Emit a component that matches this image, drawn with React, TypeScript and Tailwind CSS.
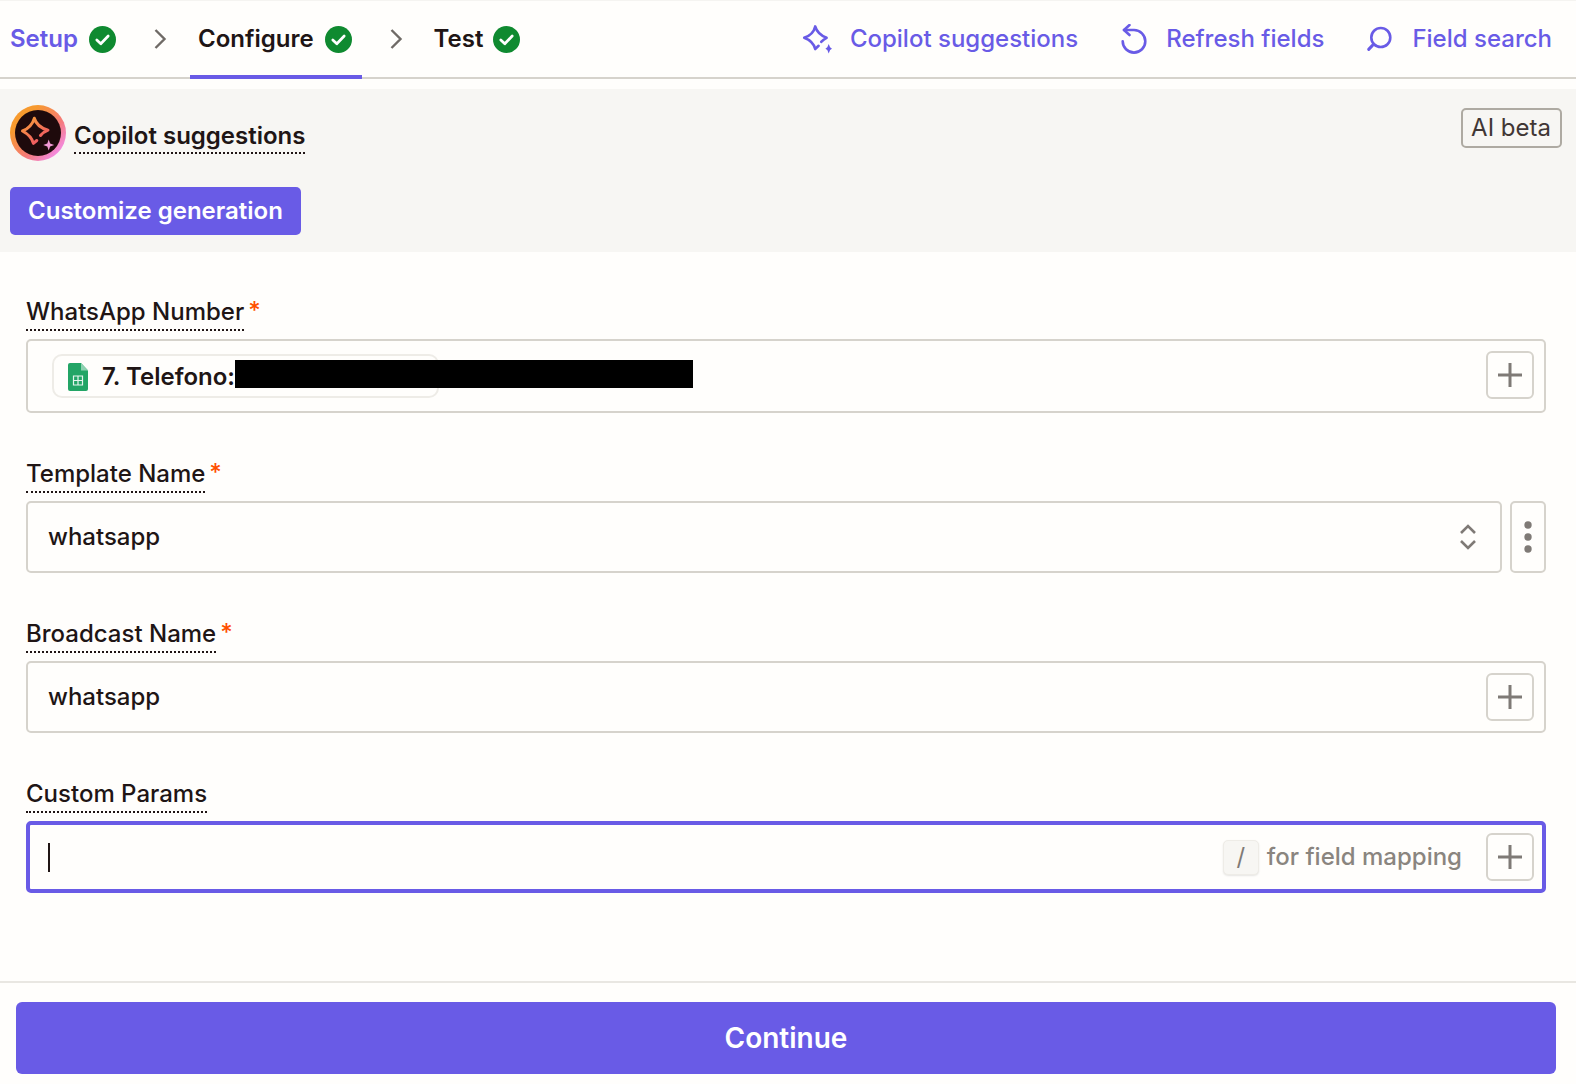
import type { ReactNode } from "react";

const CheckBadge = () => (
  <svg width="27" height="27" viewBox="0 0 27 27" className="shrink-0">
    <circle cx="13.5" cy="13.5" r="13.5" fill="#0f8a30" />
    <path d="M7.8 14l4 3.8 7.4-7.8" fill="none" stroke="#fff" strokeWidth="2.7" strokeLinecap="round" strokeLinejoin="round" />
  </svg>
);

const Chevron = () => (
  <svg width="14" height="22" viewBox="0 0 14 22" className="shrink-0">
    <path d="M2.5 2l9 9-9 9" fill="none" stroke="#6f6a66" strokeWidth="2.4" />
  </svg>
);

const Spark = () => (
  <svg width="30" height="30" viewBox="0 0 30 30" className="shrink-0" fill="none">
    <path
      d="M16.6 21.800L13.200 25C12 20 8.500 16.200 2.200 13.800 8.500 11.500 12 8 13.200 2.400 14.800 8 18.500 11.500 24.600 13.800 22.500 14.800 20.800 16 19.200 17.800"
      stroke="#695be6"
      strokeWidth="2.600"
      strokeLinejoin="round"
      strokeLinecap="round"
    />
    <path d="M26.700 20l1.400 3.300 1.900 1.400-1.900 1.400-1.400 3.300-1.400-3.300-1.900-1.400 1.900-1.400z" fill="#695be6" />
  </svg>
);

const Refresh = () => (
  <svg width="28" height="30" viewBox="0 0 28 30" className="shrink-0" fill="none" stroke="#695be6" strokeWidth="2.600" strokeLinecap="round" strokeLinejoin="round">
    <path d="M4 6h10a11.300 11.300 0 1 1-11.300 11.300" />
    <path d="M9.500 1L4 6l5.500 5" />
  </svg>
);

const SearchIcon = () => (
  <svg width="28" height="28" viewBox="0 0 28 28" className="shrink-0" fill="none" stroke="#695be6" strokeWidth="2.600">
    <circle cx="14.800" cy="12.500" r="9.500" />
    <path d="M6.500 20.400l-3.800 4" strokeWidth="3" strokeLinecap="round" />
  </svg>
);

const Plus = () => (
  <svg width="26" height="26" viewBox="0 0 26 26">
    <path d="M1 13h24M13 1v24" stroke="#7f7a76" strokeWidth="3" />
  </svg>
);

const PlusButton = () => (
  <button className="flex h-12 w-12 shrink-0 items-center justify-center rounded-md border-2 border-[#d6d3cc] bg-[#fffefc]">
    <Plus />
  </button>
);

const Logo = () => (
  <div className="flex h-14 w-14 shrink-0 items-center justify-center rounded-full bg-[linear-gradient(135deg,#f79a2e_25%,#f57a78_60%,#f38ade_85%)]">
    <div className="flex h-[46px] w-[46px] items-center justify-center rounded-full bg-[#1e0a0c]">
      <svg width="46" height="46" viewBox="0 0 46 46" fill="none">
        <defs>
          <linearGradient id="star" x1="10" y1="8" x2="28" y2="34" gradientUnits="userSpaceOnUse">
            <stop stopColor="#f7a038" />
            <stop offset="1" stopColor="#f0506a" />
          </linearGradient>
        </defs>
        <path
          d="M21.800 30.500L18.400 33.300C17 28 13.500 24.200 7.500 21 13.500 18.500 17.500 14.500 19.300 8.300 21 14 25 18 33 20.200 30.500 21.200 27.500 23 25.500 25.500"
          stroke="url(#star)"
          strokeWidth="3"
          strokeLinejoin="round"
          strokeLinecap="round"
        />
        <path d="M33.700 29.500l1.400 4 4.100 1.500-4.100 1.500-1.400 4-1.400-4-4.100-1.500 4.100-1.500z" fill="#f29ad6" />
      </svg>
    </div>
  </div>
);

const SheetsIcon = () => (
  <svg width="20" height="28" viewBox="0 0 20 28" className="shrink-0">
    <path d="M2 0h11l7 7.500V26a2 2 0 0 1-2 2H2a2 2 0 0 1-2-2V2a2 2 0 0 1 2-2z" fill="#23a566" />
    <path d="M13 0l7 7.500h-7z" fill="#8ed1b1" />
    <path d="M5.500 13h9v9h-9z M5.500 17.500h9 M10 13v9" fill="none" stroke="#e6f5ee" strokeWidth="1.200" />
  </svg>
);

function Label({ text, required }: { text: string; required?: boolean }) {
  return (
    <div className="mb-2 flex h-[30px] items-start">
      <span className="h-[30px] border-b-2 border-dotted border-[#201515] text-[24px] leading-[22px] font-medium text-[#201515]">
        {text}
      </span>
      {required && <span className="ml-1 text-[24px] leading-[20px] font-medium text-[#ff4f00]">*</span>}
    </div>
  );
}

function Field({ children, className }: { children: ReactNode; className: string }) {
  return <div className={`flex items-center rounded-[5px] ${className}`}>{children}</div>;
}

function TopAction({ icon, text }: { icon: ReactNode; text: string }) {
  return (
    <a className="flex items-center gap-[18px] text-[24px] font-medium text-[#695be6]">
      {icon}
      {text}
    </a>
  );
}

export default function App() {
  return (
    <div className="min-h-[1084px] bg-[#fffefc] [font-family:Inter,sans-serif]">
      <header className="flex h-[79px] items-stretch justify-between border-t border-b-2 border-t-[#f5f4f1] border-b-[#d6d3cc] pr-[24px] pl-[10px]">
        <nav className="flex items-center text-[24px] font-semibold text-[#201515]">
          <div className="flex items-center gap-[11px] text-[#695be6]">
            Setup
            <CheckBadge />
          </div>
          <div className="mr-[23px] ml-[37px]">
            <Chevron />
          </div>
          <div className="-mb-0.5 flex h-[78px] items-center gap-[11px] border-b-4 border-[#695be6] pt-0.5 pr-[10px] pl-2">
            Configure
            <CheckBadge />
          </div>
          <div className="mr-[31px] ml-[27px]">
            <Chevron />
          </div>
          <div className="flex items-center gap-[10px]">
            Test
            <CheckBadge />
          </div>
        </nav>
        <div className="flex items-center gap-[42px]">
          <TopAction icon={<Spark />} text="Copilot suggestions" />
          <TopAction icon={<Refresh />} text="Refresh fields" />
          <TopAction icon={<SearchIcon />} text="Field search" />
        </div>
      </header>

      <section className="mt-[10px] flex h-[163px] items-start justify-between bg-[#f7f6f3] pt-4 pr-[14px] pl-[10px]">
        <div>
          <div className="flex items-center gap-2">
            <Logo />
            <span className="mt-[7px] border-b-2 border-dotted border-[#201515] text-[24px] leading-[33px] font-semibold text-[#201515]">
              Copilot suggestions
            </span>
          </div>
          <button className="mt-[26px] h-12 rounded-[5px] bg-[#695be6] px-[18px] text-[24px] font-semibold text-white">
            Customize generation
          </button>
        </div>
        <div className="mt-[3px] flex h-10 items-center rounded-[5px] border-2 border-[#aeaaa2] pr-[9px] pl-2 text-[24px] text-[#413735]">
          AI beta
        </div>
      </section>

      <main className="pt-[49px] pr-[30px] pl-[26px]">
        <Label text="WhatsApp Number" required />
        <Field className="relative h-[74px] justify-between border-2 border-[#d6d3cc] pr-[10px] pl-6">
          <div className="flex h-11 w-[387px] items-center gap-[14px] rounded-[10px] border-2 border-[#eeece7] pt-px pl-[14px] text-[24px] font-semibold text-[#201515]">
            <SheetsIcon />
            7. Telefono:
          </div>
          <div className="absolute top-[19px] left-[207px] h-[28px] w-[458px] bg-black" />
          <div className="mb-[2px]">
            <PlusButton />
          </div>
        </Field>

        <div className="mt-[50px]">
          <Label text="Template Name" required />
          <div className="flex gap-2">
            <Field className="h-[72px] flex-1 justify-between border-2 border-[#d6d3cc] pr-[23px] pl-5 text-[24px] font-medium text-[#201515]">
              whatsapp
              <svg width="18" height="26" viewBox="0 0 18 26" fill="none" stroke="#7f7a76" strokeWidth="2.600">
                <path d="M2 9l7-7 7 7M2 17l7 7 7-7" />
              </svg>
            </Field>
            <Field className="h-[72px] w-9 justify-center border-2 border-[#d6d3cc]">
              <svg width="8" height="32" viewBox="0 0 8 32" fill="#7f7a76">
                <circle cx="4" cy="4" r="3.700" />
                <circle cx="4" cy="16" r="3.700" />
                <circle cx="4" cy="28" r="3.700" />
              </svg>
            </Field>
          </div>
        </div>

        <div className="mt-[50px]">
          <Label text="Broadcast Name" required />
          <Field className="h-[72px] justify-between border-2 border-[#d6d3cc] pr-[10px] pl-5 text-[24px] font-medium text-[#201515]">
            whatsapp
            <PlusButton />
          </Field>
        </div>

        <div className="mt-[50px]">
          <Label text="Custom Params" />
          <Field className="h-[72px] justify-between border-4 border-[#695be6] pr-2 pl-[18px]">
            <div className="h-[29px] w-0.5 bg-[#201515]" />
            <div className="flex items-center">
              <span className="flex h-[35px] w-9 items-center justify-center rounded-[5px] border border-[#eeece7] bg-[#f7f6f3] text-[24px] text-[#7f7a76] shadow-[0_1px_2px_rgba(0,0,0,0.1)]">
                /
              </span>
              <span className="mr-6 ml-2 text-[24px] font-medium text-[#8a857f]">for field mapping</span>
              <PlusButton />
            </div>
          </Field>
        </div>
      </main>

      <footer className="mt-[88px] border-t-2 border-[#e9e7e2] px-4 pt-[19px] pb-[10px]">
        <button className="h-[72px] w-[1540px] rounded-md bg-[#695be6] text-[28px] font-semibold text-white">
          Continue
        </button>
      </footer>
    </div>
  );
}
